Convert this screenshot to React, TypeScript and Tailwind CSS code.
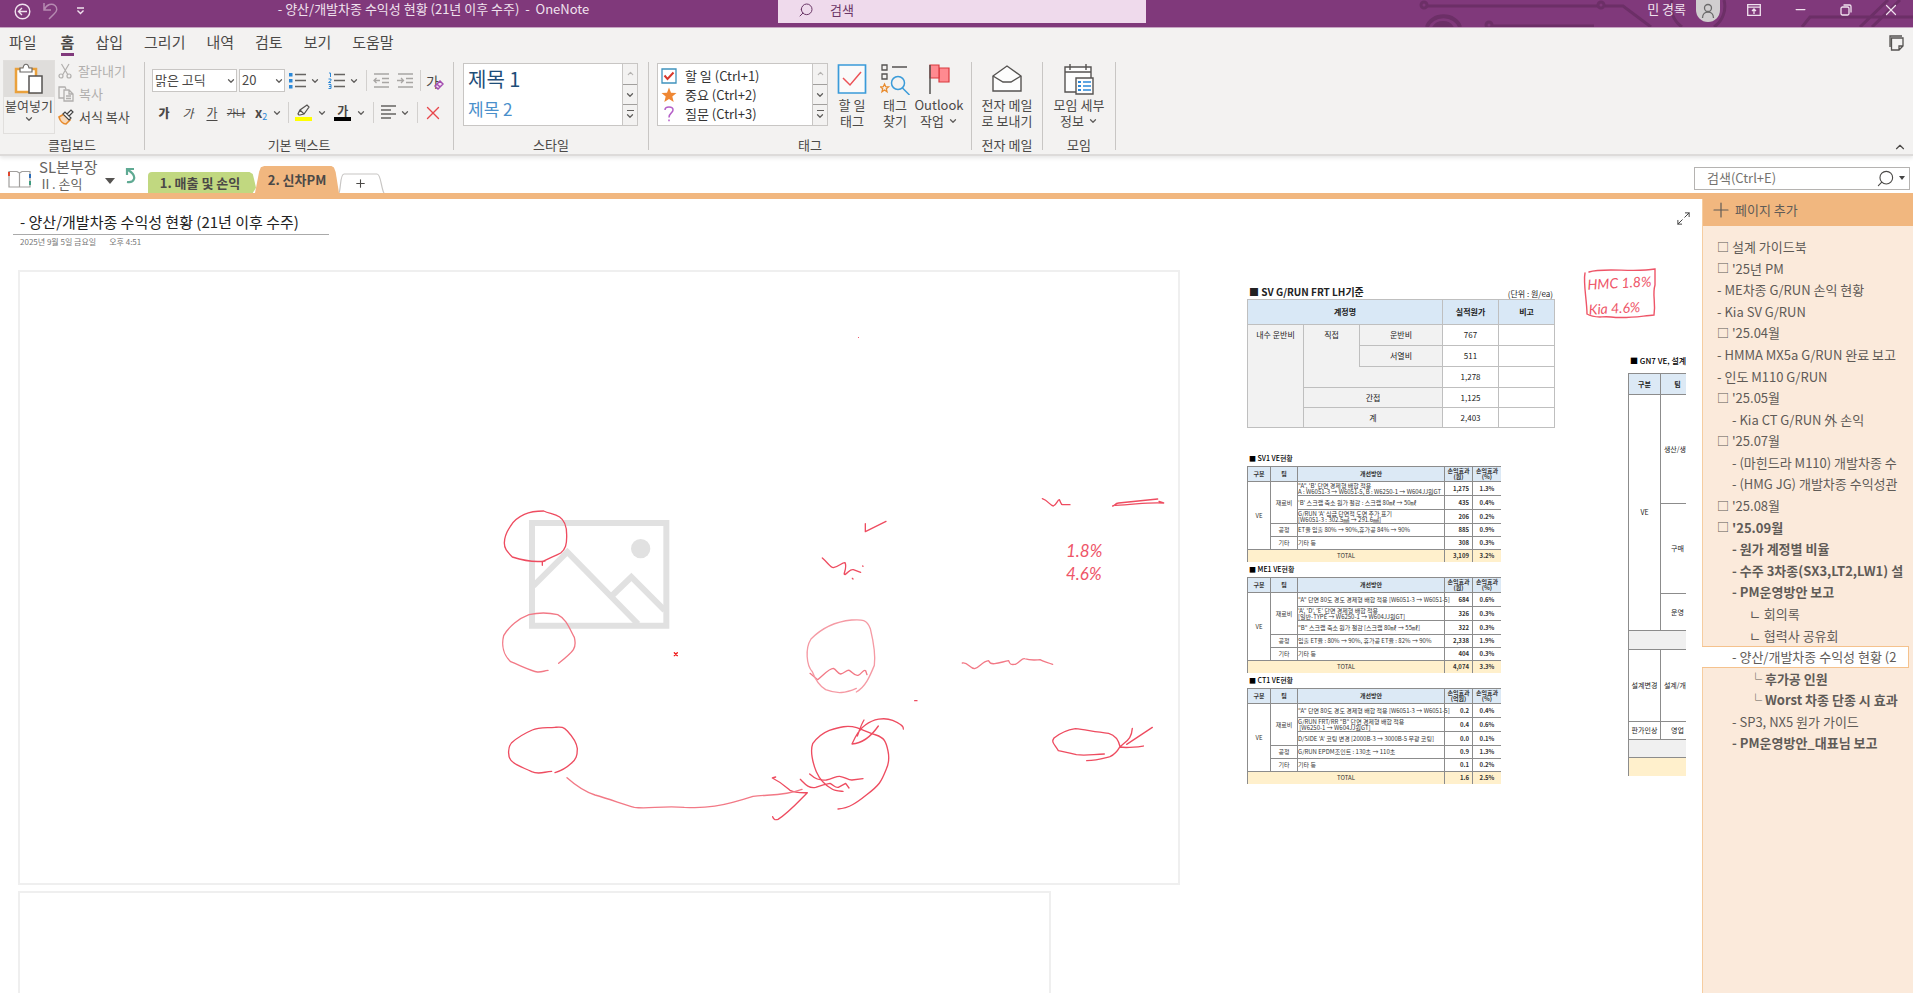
import type { ReactNode } from "react";
import { ChevronDown, ChevronUp, Plus, Minus, X, Search, Maximize2 } from "lucide-react";

const ribbonTabs = ["홈", "삽입", "그리기", "내역", "검토", "보기", "도움말"];

const pages = [
  { text: "설계 가이드북", level: 0, box: true },
  { text: "'25년 PM", level: 0, box: true },
  { text: "- ME차종 G/RUN 손익 현황", level: 0 },
  { text: "- Kia SV G/RUN", level: 0 },
  { text: "'25.04월", level: 0, box: true },
  { text: "- HMMA MX5a G/RUN 완료 보고", level: 0 },
  { text: "- 인도 M110 G/RUN", level: 0 },
  { text: "'25.05월", level: 0, box: true },
  { text: "- Kia CT G/RUN 外 손익", level: 1 },
  { text: "'25.07월", level: 0, box: true },
  { text: "- (마힌드라 M110) 개발차종 수", level: 1 },
  { text: "- (HMG JG) 개발차종 수익성관", level: 1 },
  { text: "'25.08월", level: 0, box: true },
  { text: "'25.09월", level: 0, box: true, bold: true },
  { text: "- 원가 계정별 비율", level: 1, bold: true },
  { text: "- 수주 3차종(SX3,LT2,LW1) 설", level: 1, bold: true },
  { text: "- PM운영방안 보고", level: 1, bold: true },
  { text: "ㄴ 회의록", level: 2 },
  { text: "ㄴ 협력사 공유회", level: 2 },
  { text: "- 양산/개발차종 수익성 현황 (2", level: 1, active: true },
  { text: "└ 후가공 인원", level: 2, bold: true },
  { text: "└ Worst 차종 단종 시 효과", level: 2, bold: true },
  { text: "- SP3, NX5 원가 가이드", level: 1 },
  { text: "- PM운영방안_대표님 보고", level: 1, bold: true },
];

const levelPadding = ["pl-[15px]", "pl-[30px]", "pl-[47px]"];

const veTables = [
  {
    title: "SV1 VE현황",
    unit: "(원)",
    rows: [
      ["\"A\", 'B' 단면 경제형 배합 적용\nA : W6051-3 → W6051-5, B : W6250-1 → W604JJ원GT", "1,275", "1.3%"],
      ["'B' 스크랩 축소 원가 절감 : 스크랩 80㎖ → 50㎖", "435", "0.4%"],
      ["G/RUN 'A' 심금 단면적 도면 추가 표기\n[W6051-3 : 302.5㎟ → 291.6㎟]", "206", "0.2%"],
      ["ET율 입출 80% → 90%,휴가공 84% → 90%", "885", "0.9%"],
      ["기타 등", "308", "0.3%"],
    ],
    total: ["3,109", "3.2%"],
  },
  {
    title: "ME1 VE현황",
    unit: "(원)",
    rows: [
      ["\"A\" 단면 80도 경도 경제형 배합 적용 [W6051-3 → W6051-5]", "684", "0.6%"],
      ["'A', 'D', 'E' 단면 경제형 배합 적용\n[일반-TYPE → W6250-1 → W604JJ원GT]", "326", "0.3%"],
      ["\"B\" 스크랩 축소 원가 절감 [스크랩 80㎖ → 55㎖]", "322", "0.3%"],
      ["입출 ET율 : 80% → 90%, 휴가공 ET율 : 82% → 90%", "2,338", "1.9%"],
      ["기타 등", "404", "0.3%"],
    ],
    total: ["4,074", "3.3%"],
  },
  {
    title: "CT1 VE현황",
    unit: "(억원)",
    rows: [
      ["\"A\" 단면 80도 경도 경제형 배합 적용 [W6051-3 → W6051-5]", "0.2", "0.4%"],
      ["G/RUN FRT/RR \"B\" 단면 경제형 배합 적용\n [W6250-1 → W604JJ원GT]", "0.4", "0.6%"],
      ["D/SIDE 'A' 코팅 변경 [2000B-3 → 3000B-5 무광 코팅]", "0.0", "0.1%"],
      ["G/RUN EPDM조인트 : 130초 → 110초", "0.9", "1.3%"],
      ["기타 등", "0.1", "0.2%"],
    ],
    total: ["1.6", "2.5%"],
  },
];

const Caret = () => <ChevronDown size={10} strokeWidth={3} className="shrink-0 text-[#605e5c]" />;

const VLine = () => <span className="h-[21px] w-px shrink-0 bg-[#d2d0ce]" />;

const Group = ({ label, width, children }: { label: string; width: string; children: ReactNode }) => (
  <section className={`${width} flex shrink-0`}>
    <div className="flex min-w-0 flex-1 flex-col">
      <div className="h-[76px]">{children}</div>
      <p className="text-center leading-[18px] whitespace-nowrap">{label}</p>
    </div>
    <div className="mt-[2px] mb-1 w-px bg-[#c8c6c4]" />
  </section>
);

const BigButton = ({ icon, lines, caret, width }: { icon: ReactNode; lines: string[]; caret?: boolean; width: string }) => (
  <button className={`${width} flex flex-col items-center pt-[3px] leading-4 whitespace-nowrap`}>
    {icon}
    <span className="mt-[2px]">{lines[0]}</span>
    <span className="flex items-center gap-1">
      {lines[1]}
      {caret && <Caret />}
    </span>
  </button>
);

const GalleryScroll = () => (
  <div className="flex w-[15px] shrink-0 flex-col border-l border-[#c8c6c4] bg-[#f3f2f1]">
    <button aria-label="위로" className="flex flex-1 items-center justify-center text-[#b5b3b1]">
      <ChevronUp size={9} strokeWidth={3} />
    </button>
    <button aria-label="아래로" className="flex flex-1 items-center justify-center border-y border-[#a19f9d]">
      <Caret />
    </button>
    <button aria-label="더 보기" className="flex flex-1 flex-col items-center justify-center">
      <span className="h-px w-[7px] bg-[#605e5c]" />
      <Caret />
    </button>
  </div>
);

/* ---------- title bar ---------- */

const TitleBar = () => (
  <header className="relative flex h-7 shrink-0 items-start border-b border-[#c9a6c5] bg-[#80397b] text-[13px] text-[#f0e2ee]">
    <svg className="absolute top-0 right-0 h-[27px] w-[513px]" viewBox="0 0 513 27" fill="none" stroke="#6c2f67" strokeWidth="3">
      <circle cx="24" cy="5" r="3" />
      <path d="M27 6H198M205 6h18l28 21" />
      <circle cx="201" cy="5" r="3" />
      <path d="M27 27a17 14 0 0 1 33 0" strokeWidth="4" />
      <path d="M34 27a10 8 0 0 1 18 0z" fill="#6c2f67" />
      <circle cx="89" cy="25" r="3" />
      <path d="M92 26h102" />
      <path d="M272 0a25 25 0 0 0 10 27M324 0a25 25 0 0 1-10 27M402 27l8-10h103M460 27l28-27M472 27l28-27" />
    </svg>
    <div className="relative flex flex-1 items-start">
      <div className="flex items-center gap-[11px] pt-[2px] pl-[14px]">
        <button aria-label="뒤로">
          <svg width="17" height="17" viewBox="0 0 17 17" fill="none" stroke="currentColor" strokeWidth="1.4">
            <circle cx="8.500" cy="8.500" r="7.300" />
            <path d="M13 8.500H4.500M8 5L4.500 8.500 8 12" />
          </svg>
        </button>
        <button aria-label="실행 취소" className="text-[#b68bb2]">
          <svg width="17" height="18" viewBox="0 0 17 18" fill="none" stroke="currentColor" strokeWidth="1.500">
            <path d="M2 1v7h7M2 8C5 2 10 1 13 3.500s2 6-1 8.500l-5 5" />
          </svg>
        </button>
        <button aria-label="빠른 실행 사용자 지정" className="ml-[6px]">
          <svg width="9" height="8" viewBox="0 0 9 8" fill="none" stroke="currentColor" strokeWidth="1.400">
            <path d="M1 1h7M1.500 3.500l3 3 3-3" />
          </svg>
        </button>
      </div>
      <h1 className="flex-1 pl-1 text-center leading-[17px] whitespace-pre">
        {"- 양산/개발차종 수익성 현황 (21년 이후 수주)  -  OneNote"}
      </h1>
    </div>
    <label className="relative flex h-[23px] w-[368px] items-center gap-4 bg-[#efdaec] pb-1 pl-5 text-[#6b3767]">
      <Search size={16} strokeWidth={1.5} className="-scale-x-100" />
      <input aria-label="검색" placeholder="검색" className="h-5 w-60 bg-transparent outline-none placeholder:text-[#6b3767]" />
    </label>
    <div className="relative flex w-[767px] items-start justify-end">
      <span className="leading-[17px]">민 경록</span>
      <span className="ml-[10px] flex h-[22px] w-6 items-center justify-center rounded-t-lg rounded-b-full bg-[#d0cecf] text-[#6a6a6a]">
        <svg width="14" height="18" viewBox="0 0 14 18" fill="none" stroke="currentColor" strokeWidth="1.300">
          <circle cx="7" cy="6" r="3.500" />
          <path d="M1.500 16c0-8 11-8 11 0" />
        </svg>
      </span>
      <button aria-label="리본 표시 옵션" className="ml-[27px] pt-1">
        <svg width="14" height="12" viewBox="0 0 14 12" fill="none" stroke="currentColor" strokeWidth="1.300">
          <path d="M.700.700h12.600v10.600H.700zM.700 3.200h12.600M7 10V5M5 7l2-2 2 2" />
        </svg>
      </button>
      <button aria-label="최소화" className="ml-8 pt-[2px]">
        <Minus size={15} strokeWidth={2} />
      </button>
      <button aria-label="이전 크기로" className="ml-[32px] pt-1">
        <svg width="12" height="12" viewBox="0 0 12 12" fill="none" stroke="currentColor" strokeWidth="1.300">
          <rect x="1" y="3" width="8" height="8" rx="1.500" />
          <path d="M3.500 1h6a1.500 1.500 0 0 1 1.500 1.500v6" />
        </svg>
      </button>
      <button aria-label="닫기" className="mr-[13px] ml-[30px] pt-px">
        <X size={18} strokeWidth={1.6} />
      </button>
    </div>
  </header>
);

/* ---------- ribbon ---------- */

const ClipboardGroup = () => (
  <Group label="클립보드" width="w-[145px]">
    <div className="flex pl-[3px]">
      <button className="flex h-[74px] w-[52px] flex-col items-center border border-[#e1dfdd] whitespace-nowrap">
        <span className="flex h-[36px] w-full shrink-0 items-center justify-center bg-[#dfdddb]">
          <svg width="30" height="32" viewBox="0 0 30 32" fill="none">
            <path d="M2 6h20v23H2z" fill="#fff" stroke="#eaa13c" strokeWidth="2.500" />
            <path d="M6 9V5h3c1-5 5-5 6 0h3v4z" fill="#fff" stroke="#6b6967" strokeWidth="1.200" />
            <path d="M15 13h13v17H15z" fill="#fff" stroke="#555351" strokeWidth="1.500" />
          </svg>
        </span>
        <span className="leading-[17px]">붙여넣기</span>
        <Caret />
      </button>
      <div className="flex flex-col pl-[3px]">
        <button className="flex h-[22px] items-center gap-[5px] text-[#b1afad]">
          <svg width="15" height="16" viewBox="0 0 15 16" fill="none" stroke="currentColor" strokeWidth="1.200">
            <path d="M3.500 1l6.500 11M11 1L4.500 12" />
            <circle cx="3" cy="13" r="2" />
            <circle cx="11" cy="13" r="2" />
          </svg>
          잘라내기
        </button>
        <button className="flex h-[24px] items-center gap-[5px] text-[#b1afad]">
          <svg width="16" height="16" viewBox="0 0 16 16" fill="none" stroke="currentColor" strokeWidth="1.300">
            <path d="M6 12H1V1h6l1 2M6 4h5l4 4v7H6zM11 4v4h4M8 10h5M8 12.500h5" />
          </svg>
          복사
        </button>
        <button className="flex h-[22px] items-center gap-[5px]">
          <svg width="16" height="16" viewBox="0 0 16 16" fill="none" strokeWidth="1.200">
            <path d="M1 8l5-3 6 6-4 4c-3 0-6-3-7-7z" fill="#f9d9b8" stroke="#e88b2d" strokeWidth="1.600" />
            <path d="M5 5l2-2 6 6-2 2zM9 5l4-4 2 2-4 4" fill="#fff" stroke="#444" />
          </svg>
          서식 복사
        </button>
      </div>
    </div>
  </Group>
);

const ListIcon = ({ numbered }: { numbered?: boolean }) => (
  <svg width="17" height="17" viewBox="0 0 17 17" fill="none">
    <path d="M6 2.500h11M6 8.500h11M6 14.500h11" stroke="#666462" strokeWidth="1.300" />
    {numbered ? (
      <path d="M1 1h1.500v4M.500 7h2.500v1.500L.500 10.500H3M.500 12.500H3v4H.500M1 14.500h2" stroke="#2b88d8" strokeWidth="1" />
    ) : (
      <path d="M0 1h3.500v3.500H0zM0 7h3.500v3.500H0zM0 13h3.500v3.500H0z" fill="#2b88d8" />
    )}
  </svg>
);

const IndentIcon = ({ right }: { right?: boolean }) => (
  <svg width="16" height="15" viewBox="0 0 16 15" fill="none" stroke="#a8a6a4" strokeWidth="1.300">
    <path d="M1 1h15M9 5.500h7M9 9.500h7M1 14h15" />
    {right ? <path d="M0 7.500h6M4 5l2.500 2.500L4 10" /> : <path d="M7 7.500H1M3.500 5L1 7.500 3.500 10" />}
  </svg>
);

const TextGroup = () => (
  <Group label="기본 텍스트" width="w-[309px]">
    <div className="flex flex-col pt-[9px] pl-[7px]">
      <div className="flex h-[23px] items-center">
        <div className="relative">
          <select aria-label="글꼴" className="h-[23px] w-[85px] appearance-none border border-[#c8c6c4] bg-white pb-px pl-[2px] text-[13px]">
            <option>맑은 고딕</option>
          </select>
          <span className="pointer-events-none absolute top-[7px] right-[1px]"><Caret /></span>
        </div>
        <div className="relative ml-[2px]">
          <select aria-label="글꼴 크기" className="h-[23px] w-[46px] appearance-none border border-[#c8c6c4] bg-white pb-px pl-[2px] text-[13px]">
            <option>20</option>
          </select>
          <span className="pointer-events-none absolute top-[7px] right-[1px]"><Caret /></span>
        </div>
        <button aria-label="글머리 기호" className="ml-[4px] flex items-center gap-[4px]"><ListIcon /><Caret /></button>
        <button aria-label="번호 매기기" className="ml-[8px] flex items-center gap-[4px]"><ListIcon numbered /><Caret /></button>
        <span className="ml-[7px] flex"><VLine /></span>
        <button aria-label="내어쓰기" className="ml-[6px]"><IndentIcon /></button>
        <button aria-label="들여쓰기" className="ml-[8px]"><IndentIcon right /></button>
        <span className="ml-[7px] flex"><VLine /></span>
        <button aria-label="서식 지우기" className="ml-[5px] flex items-center">
          <span className="text-[14px] leading-5">가</span>
          <svg className="-ml-[5px] mt-[9px]" width="10" height="10" viewBox="0 0 10 10" fill="#f3e3f5" stroke="#a34cb0" strokeWidth="1.500">
            <path d="M1 6l5-5 3 3-5 5zM3 4l3 3" />
          </svg>
        </button>
      </div>
      <div className="mt-[9px] flex h-[23px] items-center text-[12px]">
        <button className="w-6 font-black">가</button>
        <button className="w-6 italic">가</button>
        <button className="w-6 underline underline-offset-2">가</button>
        <button className="w-6 text-[10px] line-through">가나</button>
        <button aria-label="아래 첨자" className="ml-[7px] flex items-center">
          <b className="text-[13px]">x</b>
          <span className="mt-2 text-[9px] text-[#2b88d8]">2</span>
          <span className="ml-[5px]"><Caret /></span>
        </button>
        <span className="ml-[6px] flex"><VLine /></span>
        <button aria-label="강조 색" className="ml-[6px] flex items-center gap-[5px]">
          <svg width="17" height="17" viewBox="0 0 17 17" fill="none" stroke="#555351" strokeWidth="1.200">
            <path d="M4 11l-1-1 2-4 7-5 2 2-5 7-4 1zM5 6l4 4" />
            <path d="M0 15h17" stroke="#ffff00" strokeWidth="4" />
          </svg>
          <Caret />
        </button>
        <button aria-label="글꼴 색" className="ml-[7px] flex items-center gap-[5px]">
          <span className="flex w-[17px] flex-col items-center leading-[13px] font-bold">
            가
            <span className="h-[4px] w-full bg-black" />
          </span>
          <Caret />
        </button>
        <span className="ml-[7px] flex"><VLine /></span>
        <button aria-label="맞춤" className="ml-[7px] flex items-center gap-[4px]">
          <svg width="15" height="15" viewBox="0 0 15 15" stroke="#666462" strokeWidth="1.300">
            <path d="M0 1h15M0 5h10M0 9h15M0 13h10" />
          </svg>
          <Caret />
        </button>
        <span className="ml-[7px] flex"><VLine /></span>
        <button aria-label="삭제" className="ml-[4px] text-[#e8474c]"><X size={22} strokeWidth={1.5} /></button>
      </div>
    </div>
  </Group>
);

const StyleGroup = () => (
  <Group label="스타일" width="w-[195px]">
    <div className="mt-[3px] ml-[9px] flex h-[63px] w-[175px] border border-[#c8c6c4] bg-white">
      <div className="flex flex-1 flex-col pl-1">
        <button className="h-[30px] text-left text-[20px] leading-[30px] text-[#1e4e79]">제목 1</button>
        <button className="h-[30px] text-left text-[17px] leading-[30px] text-[#4a8fcb]">제목 2</button>
      </div>
      <GalleryScroll />
    </div>
  </Group>
);

const TagGroup = () => (
  <Group label="태그" width="w-[323px]">
    <div className="flex">
      <div className="mt-[3px] ml-[8px] flex h-[63px] w-[171px] border border-[#c8c6c4] bg-white text-[#333]">
        <div className="flex flex-1 flex-col pt-[2px] pl-[3px] whitespace-nowrap">
          <button className="flex h-[19px] items-center gap-[8px]">
            <svg width="16" height="16" viewBox="0 0 16 16" fill="none">
              <path d="M1 1h14v14H1z" stroke="#3f93bd" strokeWidth="1.300" />
              <path d="M3.500 7.500l3 3.500 6-6.500" stroke="#d8382c" strokeWidth="2" />
            </svg>
            할 일 (Ctrl+1)
          </button>
          <button className="flex h-[19px] items-center gap-[8px]">
            <svg width="16" height="16" viewBox="0 0 16 16" fill="#ef8733">
              <path d="M8 .500l2 5.200 5.500.300-4.200 3.500 1.400 5.500L8 12l-4.700 3 1.400-5.500L.500 6 6 5.700z" />
            </svg>
            중요 (Ctrl+2)
          </button>
          <button className="flex h-[19px] items-center gap-[8px]">
            <svg width="16" height="16" viewBox="0 0 16 16" fill="none" stroke="#b560c8" strokeWidth="1.500">
              <path d="M4 4c0-4 8-4 8 0 0 3-4 3-4 7.500M8 13.500v1.800" />
            </svg>
            질문 (Ctrl+3)
          </button>
        </div>
        <GalleryScroll />
      </div>
      <BigButton
        width="w-[48px]"
        lines={["할 일", "태그"]}
        icon={
          <svg width="30" height="32" viewBox="0 0 30 32" fill="none">
            <path d="M1.500 2h27v28h-27z" fill="#fafafa" stroke="#3a9bd9" strokeWidth="1.700" />
            <path d="M6 15l7 7L24 9" stroke="#ec5358" strokeWidth="1.500" />
          </svg>
        }
      />
      <BigButton
        width="w-[38px]"
        lines={["태그", "찾기"]}
        icon={
          <svg width="30" height="32" viewBox="0 0 30 32" fill="none" stroke="#555351" strokeWidth="1.300">
            <path d="M2 2h5v5H2zM2 11h5v5H2zM12 4h15" />
            <path d="M4.500 21l1.200 2.700 2.800.200-2.200 1.800.700 3-2.500-1.700L2 28.700l.700-3L.500 23.900l2.800-.200z" stroke="#e88b2d" />
            <circle cx="18" cy="20" r="6.500" stroke="#3a9bd9" strokeWidth="1.500" />
            <path d="M22.500 25l7 7" stroke="#3a9bd9" strokeWidth="1.500" />
          </svg>
        }
      />
      <BigButton
        width="w-[50px]"
        caret
        lines={["Outlook", "작업"]}
        icon={
          <svg width="22" height="32" viewBox="0 0 22 32" fill="#ff8a90" stroke="#d93a3f" strokeWidth="1.200">
            <path d="M11 5h10v14H11z" />
            <path d="M2 2h9v13H2z" />
            <path d="M2 2v29" stroke="#555351" strokeWidth="1.500" />
          </svg>
        }
      />
    </div>
  </Group>
);

const Ribbon = () => (
  <div className="relative shrink-0 border-b-2 border-[#dddbda] bg-[#f3f2f1] text-[13px] text-[#4b4947] shadow-[0_2px_4px_#0000001a]">
    <nav className="flex h-8 items-start pt-[3px] pr-[9px] pl-[9px] text-[15px] leading-[22px]">
      <button className="mr-[24px]">파일</button>
      <div className="flex flex-1 gap-[21px]">
        {ribbonTabs.map((tab) => (
          <button
            key={tab}
            className={tab === "홈" ? "border-b-[3px] border-[#80397b] font-bold" : "border-b-[3px] border-transparent"}
          >
            {tab}
          </button>
        ))}
      </div>
      <button aria-label="노트" className="pt-1">
        <svg width="16" height="16" viewBox="0 0 16 16" fill="none" stroke="#555351" strokeWidth="1.300">
          <path d="M2 12V1h12M3.500 3H15v8l-4 4H3.500zM15 11h-4v4" />
        </svg>
      </button>
    </nav>
    <div className="flex h-[94px]">
      <ClipboardGroup />
      <TextGroup />
      <StyleGroup />
      <TagGroup />
      <Group label="전자 메일" width="w-[71px]">
        <BigButton
          width="w-full"
          lines={["전자 메일", "로 보내기"]}
          icon={
            <svg width="30" height="32" viewBox="0 0 30 32" fill="#fdfdfd" stroke="#555351" strokeWidth="1.400">
              <path d="M1 13L15 3l14 10v15H1z" />
              <path d="M1 13l10 6h8l10-6" fill="none" />
            </svg>
          }
        />
      </Group>
      <Group label="모임" width="w-[73px]">
        <BigButton
          width="w-full"
          caret
          lines={["모임 세부", "정보"]}
          icon={
            <svg width="32" height="32" viewBox="0 0 32 32" fill="#fdfdfd" stroke="#555351" strokeWidth="1.400">
              <path d="M2 4h26v25H2zM2 9h26M7 1v6M23 1v6" />
              <path d="M13 15h17v16H13z" />
              <path d="M20 19h8M20 23h8M20 27h8" stroke="#2b88d8" />
              <path d="M15 19h3M15 23h3M15 27h3" stroke="#2b88d8" strokeWidth="2" />
            </svg>
          }
        />
      </Group>
      <button aria-label="리본 축소" className="mr-[6px] ml-auto self-end">
        <ChevronUp size={14} strokeWidth={2} />
      </button>
    </div>
  </div>
);

/* ---------- notebook + section tabs ---------- */

const SectionBar = () => (
  <div className="flex h-[37px] shrink-0 items-end text-[13px] text-[#4b4947]">
    <button className="flex h-full items-center pl-2 text-[#666462]">
      <svg className="mt-[9px]" width="23" height="19" viewBox="0 0 23 19" fill="none" stroke="#a19f9d" strokeWidth="1.200">
        <path d="M1 1.500h8l2.500 1.500L14 1.500h8v15.500H1zM11.500 3v14" />
        <path d="M1 2v4" stroke="#e0452c" strokeWidth="2" />
        <path d="M22 4v4" stroke="#2b6cb8" strokeWidth="2" />
        <path d="M22 11v4" stroke="#3f9c80" strokeWidth="2" />
      </svg>
      <span className="ml-2 flex w-[62px] flex-col text-left">
        <span className="text-[15px] leading-[18px]">SL본부장</span>
        <span className="leading-[15px]">Ⅱ. 손익</span>
      </span>
      <svg className="mt-3 ml-1" width="10" height="6" viewBox="0 0 10 6" fill="#555351">
        <path d="M0 0h10L5 6z" />
      </svg>
    </button>
    <button aria-label="동기화" className="mb-[9px] ml-[10px]">
      <svg width="11" height="16" viewBox="0 0 11 16" fill="none" stroke="#5faa93" strokeWidth="2.200">
        <path d="M9 1H2v6M2.500 1.500C8 5 10 8 9 11s-4 3.500-7 3" />
      </svg>
    </button>
    <button className="ml-3 h-[21px] w-[108px] rounded-tl-[4px] bg-[#c1d880] pr-1 leading-[21px] font-bold [clip-path:polygon(0_0,94%_0,97%_10%,98%_30%,100%_75%,97%_100%,0_100%)]">
      1. 매출 및 손익
    </button>
    <button className="-ml-[1px] h-[27px] w-[84px] bg-[#f1b77f] font-bold [clip-path:polygon(0_100%,5%_20%,7%_5%,11%_0,91%_0,94%_6%,96%_22%,100%_100%)]">
      2. 신차PM
    </button>
    <button aria-label="새 섹션" className="relative flex h-5 w-[46px] items-center justify-center">
      <svg className="absolute inset-0" width="46" height="20" viewBox="0 0 46 20" fill="#fff" stroke="#c8c6c4" strokeWidth="1.200">
        <path d="M0 20C2 15 1 1 5 1h33c4 0 4 14 7 19" />
      </svg>
      <Plus size={13} className="relative mr-1" />
    </button>
    <label className="mr-[3px] mb-[3px] ml-auto flex h-[23px] w-[216px] items-center border border-[#b5b3b1] bg-white pr-1 pb-px pl-3">
      <input aria-label="페이지 검색" placeholder="검색(Ctrl+E)" className="min-w-0 flex-1 outline-none placeholder:text-[#75736f]" />
      <Search size={19} strokeWidth={1.4} className="-scale-x-100" />
      <svg className="ml-1" width="6" height="4" viewBox="0 0 6 4" fill="#444">
        <path d="M0 0h6L3 4z" />
      </svg>
    </label>
  </div>
);

/* ---------- canvas content ---------- */

const CostTable = () => (
  <div className="absolute top-[85px] left-[1247px] w-[308px] text-[8px] leading-[10px] text-[#222]">
    <div className="flex h-[15px] items-center justify-between px-[2px] whitespace-nowrap">
      <h3 className="text-[10px] font-bold">■ SV G/RUN FRT LH기준</h3>
      <span className="pt-[5px]">(단위 : 원/ea)</span>
    </div>
    <table className="w-full table-fixed border-collapse text-center [&_td]:border [&_td]:border-[#bfbfbf] [&_th]:border [&_th]:border-[#bfbfbf]">
      <colgroup>
        <col className="w-[56px]" />
        <col className="w-[56px]" />
        <col className="w-[83px]" />
        <col className="w-[56px]" />
        <col />
      </colgroup>
      <thead>
        <tr className="h-[25px] bg-[#d9e8f6]">
          <th colSpan={3}>계정명</th>
          <th>실적원가</th>
          <th>비고</th>
        </tr>
      </thead>
      <tbody>
        <tr className="h-[21px]">
          <td rowSpan={5} className="bg-[#f2f2f2] pt-[5px] align-top">내수 운반비</td>
          <td rowSpan={2} className="border-b-0! bg-[#f2f2f2] pt-[5px] align-top">직접</td>
          <td className="bg-[#f2f2f2]">운반비</td>
          <td>767</td>
          <td />
        </tr>
        <tr className="h-[21px]">
          <td className="bg-[#f2f2f2]">서열비</td>
          <td>511</td>
          <td />
        </tr>
        <tr className="h-[21px]">
          <td className="border-t-0! border-r-0! bg-[#f2f2f2]" />
          <td className="border-l-0! bg-[#f2f2f2]" />
          <td>1,278</td>
          <td />
        </tr>
        <tr className="h-[20px]">
          <td colSpan={2} className="bg-[#f2f2f2]">간접</td>
          <td>1,125</td>
          <td />
        </tr>
        <tr className="h-[20px]">
          <td colSpan={2} className="bg-[#f2f2f2]">계</td>
          <td>2,403</td>
          <td />
        </tr>
      </tbody>
    </table>
  </div>
);

const VeTable = ({ table }: { table: (typeof veTables)[number] }) => (
  <div className="h-[111px]">
    <h3 className="h-[15px] pl-[2px] text-[7px] leading-[15px] font-medium text-black">■ {table.title}</h3>
    <table className="w-full table-fixed border-collapse text-center [&_td]:border [&_td]:border-[#8c8c8c] [&_th]:border [&_th]:border-[#8c8c8c] [&_tr>*:last-child]:border-r-0">
      <colgroup>
        <col className="w-[23px]" />
        <col className="w-[27px]" />
        <col className="w-[147px]" />
        <col className="w-[28px]" />
        <col />
      </colgroup>
      <thead>
        <tr className="h-[15px] bg-[#dce9f5]">
          <th>구분</th>
          <th>팀</th>
          <th>개선방안</th>
          <th>손익효과<br />{table.unit}</th>
          <th>손익효과<br />(%)</th>
        </tr>
      </thead>
      <tbody>
        {table.rows.map(([text, value, ratio], i) => (
          <tr key={text} className={i < 3 ? "h-[14px]" : "h-[13px]"}>
            {i === 0 && <td rowSpan={5}>VE</td>}
            {i === 0 && <td rowSpan={3}>재료비</td>}
            {i === 3 && <td>공정</td>}
            {i === 4 && <td>기타</td>}
            <td className="text-left whitespace-pre">{text}</td>
            <td className="pr-[3px]! text-right font-bold">{value}</td>
            <td className="font-bold">{ratio}</td>
          </tr>
        ))}
        <tr className="h-[12px] bg-[#fff0cc]">
          <td colSpan={3} className="border-b-0!">TOTAL</td>
          <td className="border-b-0! pr-[3px]! text-right font-bold">{table.total[0]}</td>
          <td className="border-b-0! font-bold">{table.total[1]}</td>
        </tr>
      </tbody>
    </table>
  </div>
);

const Gn7Table = () => (
  <div className="absolute top-[157px] left-[1628px] w-[58px] overflow-hidden text-[7px] leading-[9px] whitespace-nowrap text-[#222]">
    <h3 className="h-[17px] pl-[2px] text-[8px] font-medium text-black">■ GN7 VE, 설계</h3>
    <table className="w-full table-fixed border-collapse text-center [&_td]:border [&_td]:border-r-0 [&_td]:border-[#8c8c8c] [&_td]:p-0 [&_th]:border [&_th]:border-r-0 [&_th]:border-[#8c8c8c] [&_th]:p-0">
      <thead>
        <tr className="h-[21px] bg-[#dce9f5]">
          <th className="w-8">구분</th>
          <th className="pl-2!">팀</th>
        </tr>
      </thead>
      <tbody>
        <tr className="h-[109px]">
          <td rowSpan={3}>VE</td>
          <td className="text-right">생산/생</td>
        </tr>
        <tr className="h-[90px]"><td className="pl-2!">구매</td></tr>
        <tr className="h-[37px]"><td className="pl-2!">운영</td></tr>
        <tr className="h-[19px] bg-[#f0f0f0]"><td colSpan={2} /></tr>
        <tr className="h-[72px]">
          <td>설계변경</td>
          <td className="text-right">설계/개</td>
        </tr>
        <tr className="h-[18px]">
          <td>판가인상</td>
          <td className="pl-2!">영업</td>
        </tr>
        <tr className="h-[18px] bg-[#f0f0f0]"><td colSpan={2} /></tr>
        <tr className="h-[18px] bg-[#fff0cc]"><td colSpan={2} className="border-b-0!" /></tr>
      </tbody>
    </table>
  </div>
);

const Ink = () => (
  <>
    {/* left and centre strokes, with the missing-image placeholder behind */}
    <svg className="absolute top-[291px] left-[480px] h-[340px] w-[460px]" viewBox="0 0 1380 1020" fill="none" strokeLinecap="round" strokeLinejoin="round">
      <g stroke="#e1e1e1" strokeWidth="18" strokeLinecap="butt" strokeLinejoin="miter">
        <path d="M156 99h403v308H156z" />
        <path d="M160 288L262 186l212 216M395 318l59-57 100 100" />
      </g>
      <circle cx="482" cy="176" r="29" fill="#e1e1e1" />
      <path d="M583 488l9 9M592 488l-9 9" stroke="#f01818" strokeWidth="4" />
      <g stroke="#ee4c60" strokeWidth="4">
        <path d="M187 226v-10c15-10 35-16 55-27 14-11 19-25 18-55 0-26-6-43-21-53-15-10-30-10-48-18-22 0-42 3-58 10-22 10-35 23-42 36-12 18-18 38-18 50 0 16 6 23 24 42 25 8 65 17 98 12" />
        <path d="M225 848c18-5 34-14 49-28 14-12 18-22 18-44-2-20-16-38-30-53-12-13-18-12-37-11-30 2-50 0-68 8-28 12-46 24-62 38-12 14-12 42-2 53 14 16 38 22 62 34 22 10 38 0 60-1" />
        <path d="M1074 957c34-2 60-22 85-42 40-30 45-40 60-78 9-20 8-40 5-54-6-30-12-40-36-48-22-6-36-14-58-22-28-8-50-2-82 8-20 8-36 20-50 40-8 22 0 58 11 84 8 18 18 36 47 52 8 6 18 6 33 7" />
        <path d="M1270 717c2-8-8-16-32-26-26-10-58-4-82 14-18 12-30 34-40 57 34-2 58-24 79-54M1152 690c-8 12-14 32-20 48" />
        <path d="M989 852c16 14 28 20 50 18 20-4 30-12 40-11 16 2 26 12 37 11l33-4M961 868c14 14 24 28 46 24 16-6 30-10 43-12 14 8 16 14 25 12l22-12 10 14" />
        <path d="M878 980c4 12 10 10 16 8 32-20 58-50 88-80-30 1-42-2-52-7-16-14-26-24-53-37l10-3" />
        <path d="M1156 101v24l62-31" />
        <path d="M1027 204c18 16 24 28 33 29 18-4 26-16 35-15 8 16-8 36 0 36 12-8 16-18 25-15l22 8M1117 265l2 2M1148 228l1 1M1304 632h7" />
      </g>
      <g stroke="#f27986" strokeWidth="4">
        <path d="M204 541c-14 2-18 6-32 5-14-2-30-10-80-31-22-20-28-50-21-78 16-28 46-52 76-63 26-6 60-6 86 0 28 14 36 44 50 68 8 32 0 40-47 78" />
        <path d="M261 863c38 34 64 45 84 52 48 14 86 28 118 37 44 6 80-6 150 0 64 4 110-2 206-33 44-6 90 0 147-21" />
        <path d="M990 550l23 19c18-14 34-34 47-34 10 4 12 16 22 17 12-2 18-14 26-11 10 6 16 18 26 15 12-4 16-20 23-14l4 12" />
      </g>
      <path d="M1129 606c28-16 40-46 54-80 4-30 0-60-12-110-10-28-24-28-56-26-40 4-86 20-122 57-18 28-14 80 4 98 12 32 24 44 40 54 36 14 60 10 92-4" stroke="#f59aa4" strokeWidth="4" />
    </svg>
    <span className="absolute top-[138px] left-[858px] size-px bg-[#f0586a]" />

    {/* right-hand strokes */}
    <svg className="absolute top-[281px] left-[930px] h-[300px] w-[260px]" viewBox="0 0 780 900" fill="none" stroke="#ee4c60" strokeWidth="4" strokeLinecap="round" strokeLinejoin="round">
      <path d="M337 56c18 6 22 20 33 22 10-4 12-18 18-19 4 6 4 16 10 15h22M548 78c8-2 6-8 18-9l117-12M556 76c60-2 94-10 145-7l-14-5" />
      <path d="M97 549c16-4 22 16 37 17 16-4 22-22 42-24 4 10 10 10 18 9 16-2 26-6 42-9 4 14 10 12 20 11 14-6 20-20 28-17 18 6 30 4 46 3 10 6 24 8 38 14" stroke="#f27986" />
      <path d="M523 822c-30 0-50 6-84 2-20-6-36-8-54-12-14-22-22-26-13-38 20-16 40-24 64-28 34 4 60 10 100 14 20 6 30 20 34 40-8 14-16 24-30 30-30 8-40 12-70 12M570 801c20-20 34-22 37-56M590 793l77-51M570 801c20 4 34 2 70-3" />
    </svg>
    <p className="absolute top-[340px] left-[1066px] font-[Lato] text-[17px] leading-[23px] text-[#ee5568] italic">
      1.8%<br />4.6%
    </p>

    {/* boxed note */}
    <svg className="absolute top-[66px] left-[1580px] h-[58px] w-20" viewBox="0 0 80 58" fill="none" stroke="#ee5568" strokeWidth="1.400" strokeLinecap="round">
      <path d="M5 8c-2 10 2 28 2 41 8 5 14 2 24 3 16 2 30-1 43-2 2-14-2-20 1-30V4C54 8 24 2 9 7" />
    </svg>
    <p className="absolute top-[71px] left-[1588px] -rotate-3 font-[Lato] text-[14px] leading-[25px] whitespace-nowrap text-[#ee5568] italic">
      HMC 1.8%<br />Kia 4.6%
    </p>
  </>
);

const Canvas = () => (
  <main className="relative min-w-0 flex-1 overflow-hidden bg-white">
    <div className="absolute top-[11px] left-[13px] w-[316px]">
      <h2 className="border-b border-[#aaa] pl-[7px] text-[15px] leading-6 whitespace-nowrap text-[#222]">
        - 양산/개발차종 수익성 현황 (21년 이후 수주)
      </h2>
      <p className="flex gap-[13px] pl-[7px] text-[8px] leading-[14px] text-[#777]">
        <span>2025년 9월 5일 금요일</span>
        <span>오후 4:51</span>
      </p>
    </div>
    <button aria-label="전체 화면" className="absolute top-[12px] right-[11px] text-[#444]">
      <Maximize2 size={15} strokeWidth={1.6} />
    </button>
    <div className="absolute top-[71px] left-[18px] h-[615px] w-[1162px] border-2 border-[#efefef]" />
    <div className="absolute top-[692px] left-[18px] h-[300px] w-[1033px] border-2 border-[#efefef]" />
    <CostTable />
    <div className="absolute top-[252px] left-[1247px] w-[254px] text-[6px] leading-[6px] text-[#333] [&_td]:p-0 [&_th]:p-0">
      {veTables.map((table) => (
        <VeTable key={table.title} table={table} />
      ))}
    </div>
    <Gn7Table />
    <Ink />
  </main>
);

const PageList = () => (
  <aside className="w-[211px] shrink-0 border-l border-[#f6cda0] bg-[#fbeadb] text-[13px] text-[#5f5b57]">
    <button className="flex h-[27px] w-full items-center gap-[2px] bg-[#f1b77f] pb-[5px] pl-[6px]">
      <Plus size={24} strokeWidth={1.2} />
      페이지 추가
    </button>
    <ul className="mt-[10px] grid h-[518px] auto-rows-fr">
      {pages.map((page) => (
        <li key={page.text} className={page.active ? "mr-1 -ml-px border border-l-0 border-[#f5c28d] bg-white" : "mr-1 -ml-px"}>
          <a
            href="#"
            className={`${levelPadding[page.level]} flex h-full items-center whitespace-pre ${page.bold ? "font-bold" : ""}`}
          >
            {page.box && <span className="w-[15px] text-[12px] font-medium">□</span>}
            {page.text}
          </a>
        </li>
      ))}
    </ul>
  </aside>
);

export default function App() {
  return (
    <div className="flex h-screen flex-col overflow-hidden bg-white font-['Noto_Sans_CJK_KR',sans-serif]">
      <TitleBar />
      <Ribbon />
      <SectionBar />
      <div className="h-[6px] shrink-0 bg-[#f1b77f]" />
      <div className="flex min-h-0 flex-1">
        <Canvas />
        <PageList />
      </div>
    </div>
  );
}
